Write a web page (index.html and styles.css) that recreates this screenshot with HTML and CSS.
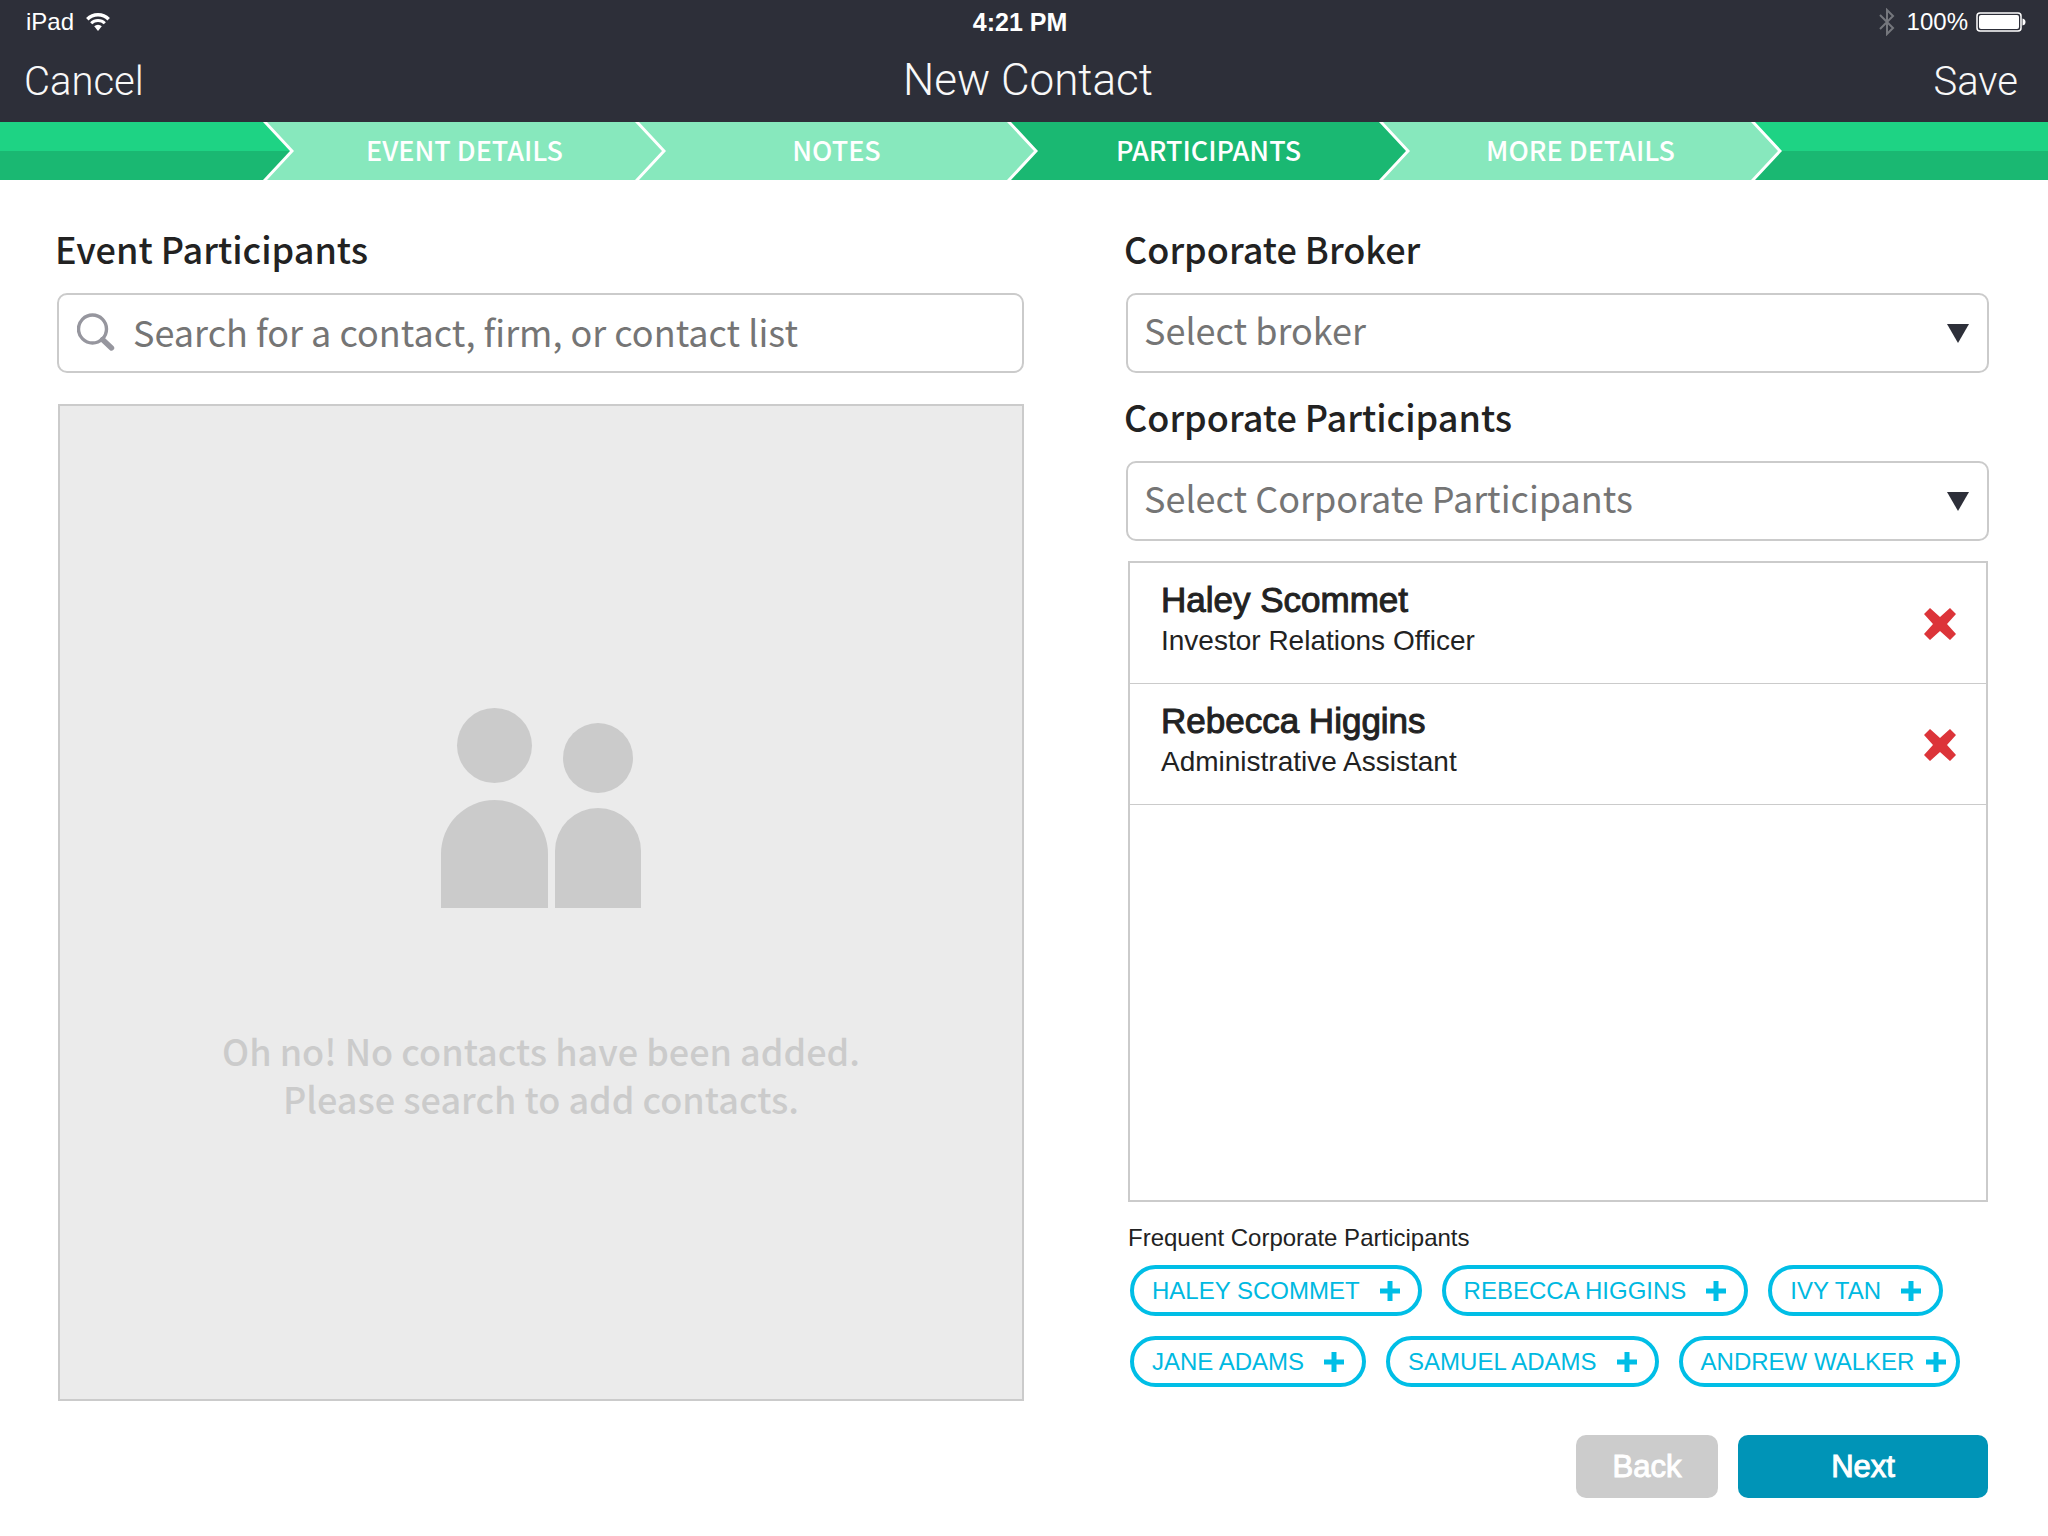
FILE: index.html
```html
<!DOCTYPE html>
<html lang="en">
<head>
<meta charset="utf-8">
<meta name="viewport" content="width=device-width, initial-scale=1">
<title>New Contact</title>
<link rel="stylesheet" href="styles.css">
</head>
<body>
<header class="topbar">
  <div class="status">
    <div class="status-side">
      <span>iPad</span>
      <svg class="wifi" width="24" height="18" viewBox="0 0 24 18" aria-hidden="true">
        <path d="M1.300 6.200A15 15 0 0 1 22.700 6.200" fill="none" stroke="#fff" stroke-width="3.400"/>
        <path d="M5.200 10.300A9.600 9.600 0 0 1 18.800 10.300" fill="none" stroke="#fff" stroke-width="3"/>
        <path d="M8.200 13.300A5.400 5.400 0 0 1 15.800 13.300L12 18Z" fill="#fff"/>
      </svg>
    </div>
    <span class="clock">4:21 PM</span>
    <div class="status-side status-end">
      <svg width="16" height="28" viewBox="0 0 16 28" fill="none" stroke="#75777d" stroke-width="2" aria-hidden="true">
        <path d="M1 7L14 20L8 26V2L14 8L1 21"/>
      </svg>
      <span class="charge">100%</span>
      <svg width="50" height="20" viewBox="0 0 50 20" aria-hidden="true">
        <rect x="1" y="1" width="44" height="18" rx="3" fill="none" stroke="#fff" stroke-width="1.500"/>
        <rect x="3" y="3" width="40" height="14" rx="2" fill="#fff"/>
        <path d="M46.500 6.500Q49.500 7 49.500 10T46.500 13.500Z" fill="#fff"/>
      </svg>
    </div>
  </div>
  <div class="titlebar">
    <button class="bar-button" type="button">Cancel</button>
    <h1 class="title">New Contact</h1>
    <button class="bar-button bar-end" type="button">Save</button>
  </div>
</header>

<nav aria-label="Steps">
  <ol class="steps">
    <li class="step step-first" aria-hidden="true"></li>
    <li class="step"><a href="#details">EVENT DETAILS</a></li>
    <li class="step"><a href="#notes">NOTES</a></li>
    <li class="step step-current"><a href="#participants" aria-current="step">PARTICIPANTS</a></li>
    <li class="step"><a href="#more">MORE DETAILS</a></li>
    <li class="step step-last" aria-hidden="true"></li>
  </ol>
</nav>

<main class="content" id="participants">
  <section class="column">
    <h2 class="heading"><label for="search">Event Participants</label></h2>
    <div class="field search">
      <svg class="glass" width="38" height="38" viewBox="0 0 38 38" fill="none" stroke="#96969e" aria-hidden="true">
        <circle cx="15.500" cy="16" r="14" stroke-width="3.400"/>
        <path d="M25.500 26.500L34.500 35" stroke-width="5.400" stroke-linecap="round"/>
      </svg>
      <input class="control" id="search" type="text" placeholder="Search for a contact, firm, or contact list">
    </div>
    <div class="empty">
      <svg width="200" height="200" viewBox="0 0 200 200" fill="#cbcbcb" aria-hidden="true">
        <circle cx="53.500" cy="37.500" r="37.500"/>
        <path d="M0 200V146A53.500 54 0 0 1 107 146V200Z"/>
        <circle cx="157" cy="50" r="35"/>
        <path d="M114 200V143A43 43 0 0 1 200 143V200Z"/>
      </svg>
      <p class="empty-text">Oh no! No contacts have been added.<br>Please search to add contacts.</p>
    </div>
  </section>

  <section class="column column-right">
    <h2 class="heading"><label for="broker">Corporate Broker</label></h2>
    <div class="field">
      <select class="control" id="broker"><option>Select broker</option></select>
      <svg class="arrow" width="22" height="19" viewBox="0 0 22 19" aria-hidden="true"><path d="M0 0H22L11 19Z" fill="#2d2f39"/></svg>
    </div>
    <h2 class="heading heading-next"><label for="corporate">Corporate Participants</label></h2>
    <div class="field">
      <select class="control" id="corporate"><option>Select Corporate Participants</option></select>
      <svg class="arrow" width="22" height="19" viewBox="0 0 22 19" aria-hidden="true"><path d="M0 0H22L11 19Z" fill="#2d2f39"/></svg>
    </div>
    <ul class="people">
      <li class="person">
        <div class="person-text">
          <div class="name">Haley Scommet</div>
          <div class="role">Investor Relations Officer</div>
        </div>
        <button class="remove" type="button" aria-label="Remove Haley Scommet">
          <svg width="32" height="32" viewBox="0 0 32 32" aria-hidden="true"><path d="M6 0L16 9L26 0L32 6L23 16L32 26L26 32L16 23L6 32L0 26L9 16L0 6Z" fill="#dc3439"/></svg>
        </button>
      </li>
      <li class="person">
        <div class="person-text">
          <div class="name">Rebecca Higgins</div>
          <div class="role">Administrative Assistant</div>
        </div>
        <button class="remove" type="button" aria-label="Remove Rebecca Higgins">
          <svg width="32" height="32" viewBox="0 0 32 32" aria-hidden="true"><path d="M6 0L16 9L26 0L32 6L23 16L32 26L26 32L16 23L6 32L0 26L9 16L0 6Z" fill="#dc3439"/></svg>
        </button>
      </li>
    </ul>
    <h3 class="frequent">Frequent Corporate Participants</h3>
    <div class="chips">
      <button class="chip" type="button">HALEY SCOMMET<svg class="plus" viewBox="0 0 20 20" aria-hidden="true"><path d="M10 0V20M0 10H20"/></svg></button>
      <button class="chip" type="button">REBECCA HIGGINS<svg class="plus" viewBox="0 0 20 20" aria-hidden="true"><path d="M10 0V20M0 10H20"/></svg></button>
      <button class="chip" type="button">IVY TAN<svg class="plus" viewBox="0 0 20 20" aria-hidden="true"><path d="M10 0V20M0 10H20"/></svg></button>
      <button class="chip" type="button">JANE ADAMS<svg class="plus" viewBox="0 0 20 20" aria-hidden="true"><path d="M10 0V20M0 10H20"/></svg></button>
      <button class="chip" type="button">SAMUEL ADAMS<svg class="plus" viewBox="0 0 20 20" aria-hidden="true"><path d="M10 0V20M0 10H20"/></svg></button>
      <button class="chip chip-tight" type="button">ANDREW WALKER<svg class="plus" viewBox="0 0 20 20" aria-hidden="true"><path d="M10 0V20M0 10H20"/></svg></button>
    </div>
  </section>
</main>

<footer class="actions">
  <button class="action action-back" type="button">Back</button>
  <button class="action action-next" type="button">Next</button>
</footer>
</body>
</html>
```
FILE: styles.css
```css
:root {
  --sans: "Liberation Sans", Arial, sans-serif;
  --source: "Noto Sans CJK SC", "Noto Sans", sans-serif;
  --line: #cbcbcb;
  --ink: #222;
  --navy: #2d2f39;
  --cyan: #00bee6;
}

* { box-sizing: border-box; }

body {
  margin: 0;
  min-height: 100vh;
  display: flex;
  flex-direction: column;
  background: #fff;
  color: var(--ink);
  font-family: var(--sans);
}

button, input, select { font: inherit; }
button { cursor: pointer; }
svg { display: block; flex: none; }

/* Status and title bars */
.topbar {
  background: var(--navy);
  color: #fff;
  padding-bottom: 10px;
}

.status {
  display: grid;
  grid-template-columns: 1fr auto 1fr;
  align-items: center;
  padding: 0 22px 0 26px;
  height: 44px;
  font-size: 24px;
}

.status-side { display: flex; align-items: center; gap: 12px; }
.status-end { justify-content: flex-end; }
.clock { padding-right: 12px; font-size: 25px; font-weight: 700; }
.charge { margin-right: -4px; }

.titlebar {
  display: grid;
  grid-template-columns: 1fr auto 1fr;
  align-items: baseline;
  padding: 4px 30px 0 24px;
  font-family: Roboto, var(--sans);
  font-weight: 300;
}

.bar-button {
  justify-self: start;
  padding: 0;
  border: 0;
  background: none;
  color: #f8f8f8;
  font-size: 40px;
}

.bar-end { justify-self: end; }

.title {
  margin: 0;
  padding-left: 14px;
  color: #f8f8f8;
  font-size: 44px;
  font-weight: 300;
  line-height: 64px;
}

/* Step arrows */
.steps {
  display: grid;
  grid-template-columns: 263fr repeat(4, 368fr) 293fr;
  column-gap: 4px;
  height: 58px;
  margin: 0;
  padding: 0;
  overflow: hidden;
  list-style: none;
}

.step {
  display: flex;
  align-items: center;
  justify-content: center;
  margin-right: -27px;
  padding-bottom: 2px;
  background: #87e8bd;
  clip-path: polygon(0 0, calc(100% - 27px) 0, 100% 50%, calc(100% - 27px) 100%, 0 100%, 27px 50%);
}

.step a {
  color: #fff;
  font-family: var(--source);
  font-size: 27px;
  font-weight: 500;
  line-height: 40px;
  text-decoration: none;
}

.step-first, .step-last { background: linear-gradient(#1ed384 50%, #1ab872 50%); }
.step-first { clip-path: polygon(0 0, calc(100% - 27px) 0, 100% 50%, calc(100% - 27px) 100%, 0 100%); }
.step-current { background: #1ab872; }

/* Form */
.content {
  flex: 1;
  display: grid;
  grid-template-columns: 967fr 863fr;
  column-gap: 102px;
  padding: 44px 59px 0 57px;
}

.column { display: flex; flex-direction: column; min-width: 0; }
.column-right { padding-bottom: 14px; }

.heading {
  margin: 0 0 21px -2px;
  font-family: var(--source);
  font-size: 36px;
  font-weight: 500;
  line-height: 48px;
}

.heading-next { margin-top: 19px; }

.field {
  position: relative;
  display: flex;
  align-items: center;
  height: 80px;
  border: 2px solid var(--line);
  border-radius: 10px;
}

.control {
  flex: 1;
  min-width: 0;
  height: 100%;
  padding: 0 60px 9px 16px;
  border: 0;
  border-radius: 8px;
  appearance: none;
  background: none;
  color: #757575;
  font-family: var(--source);
  font-size: 36px;
  font-weight: 400;
}

.control::placeholder { color: #757575; opacity: 1; }
.search { gap: 2px; padding-left: 18px; }
.search .control { padding-bottom: 4px; }
.glass { margin-bottom: 3px; }

.arrow {
  position: absolute;
  right: 18px;
  pointer-events: none;
}

.empty {
  flex: 1;
  display: flex;
  flex-direction: column;
  align-items: center;
  justify-content: center;
  gap: 118px;
  margin: 31px 0 0 1px;
  padding-top: 24px;
  border: 2px solid var(--line);
  background: #ebebeb;
}

.empty-text {
  margin: 0;
  color: #cbcbcb;
  font-family: var(--source);
  font-size: 36px;
  font-weight: 500;
  line-height: 48px;
  text-align: center;
}

.people {
  flex: 1;
  margin: 20px 1px 0 2px;
  padding: 0;
  border: 2px solid var(--line);
  list-style: none;
}

.person {
  display: flex;
  align-items: center;
  justify-content: space-between;
  height: 121px;
  padding: 0 30px 0 31px;
  border-bottom: 1px solid var(--line);
}

.person-text { padding-bottom: 6px; }

.name {
  font-size: 35px;
  line-height: 42px;
  -webkit-text-stroke: 1px currentColor;
}

.role { font-size: 28px; line-height: 40px; }
.remove { padding: 2px 0 0; border: 0; background: none; }

.frequent {
  margin: 20px 0 11px 2px;
  font-size: 24px;
  font-weight: 400;
  line-height: 32px;
}

.chips {
  display: flex;
  flex-wrap: wrap;
  gap: 20px;
  margin-left: 4px;
}

.chip {
  display: flex;
  align-items: center;
  gap: 20px;
  height: 51px;
  padding: 0 18px;
  border: 4px solid var(--cyan);
  border-radius: 26px;
  background: #fff;
  color: #00b9e1;
  font-size: 24px;
}

.chip-tight { gap: 12px; padding-right: 10px; }
.plus { width: 20px; height: 20px; stroke: var(--cyan); stroke-width: 5; }

.actions {
  display: flex;
  justify-content: flex-end;
  gap: 20px;
  padding: 34px 60px 38px;
}

.action {
  height: 63px;
  border: 0;
  border-radius: 10px;
  color: #fff;
  font-size: 31px;
  -webkit-text-stroke: 1px currentColor;
}

.action-back { width: 142px; background: #ccc; }
.action-next { width: 250px; background: #0094b7; }
```
